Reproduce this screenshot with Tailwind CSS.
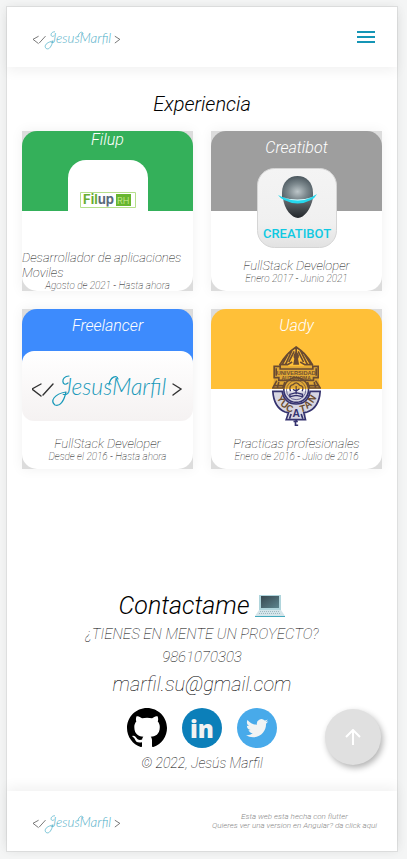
<!DOCTYPE html>
<html lang="es">
<head>
<meta charset="utf-8">
<meta name="viewport" content="width=device-width, initial-scale=1">
<title>Jesús Marfil</title>
<script src="https://cdn.jsdelivr.net/npm/@tailwindcss/browser@4"></script>
</head>
<body class="min-h-screen bg-[#f4f5f5] pt-[6px] pr-[9px] pb-[7px] pl-[6px] font-['Roboto',sans-serif] italic font-light text-black">
<svg class="hidden" aria-hidden="true">
  <symbol id="signature" viewBox="0 0 151 36">
    <g fill="none" stroke-linecap="round">
      <path d="M9 11 0 16 9 23M21 11 11 22" stroke="#333" stroke-width="1.4"/>
      <path d="m141 11 8 5-8 6" stroke="#333" stroke-width="1.4"/>
      <path d="M37 3c-9 0-7 12-1 7M34 19C22 21 18 28 23 32c5 2 9-4 11-13M77 12c1-8 8-11 9-6" stroke="#1999b9" stroke-width="1.2"/>
    </g>
    <text x="31" y="22" fill="#1999b9" font-family="Lato, sans-serif" font-style="italic" font-weight="300" font-size="23">JesusMarfil</text>
  </symbol>
</svg>
<div class="flex min-h-[846px] flex-col border border-[#dedfdf] bg-white shadow-[0_0_10px_rgba(0,0,0,0.05)]">
  <header class="flex h-[60px] items-center justify-between pr-[22px] pl-[26px] shadow-[0_4px_12px_rgba(0,0,0,0.06)]">
    <a href="#inicio" aria-label="Jesús Marfil" class="block pt-[6px]"><svg class="h-[21px] w-[88px] opacity-80"><use href="#signature"/></svg></a>
    <button type="button" aria-label="Menú"><svg class="size-[18px]" viewBox="0 0 18 18" fill="none" stroke="#1595b5" stroke-width="2"><path d="M0 4h18M0 9h18M0 14h18"/></svg></button>
  </header>

  <main id="inicio" class="flex flex-1 flex-col">
    <section class="px-[15px] pt-6">
      <h1 class="text-center text-[20px] leading-[26px]">Experiencia</h1>
      <div class="mt-[14px] grid grid-cols-2 gap-[18px]">
        <div class="bg-[#dcdcdc] shadow-[0_0_12px_rgba(0,0,0,0.06)]">
          <article class="flex h-40 flex-col items-center justify-center overflow-hidden rounded-[15px] bg-[linear-gradient(#34b05a_50%,#ffffff_50%)] font-thin text-black">
            <h2 class="text-[16px] leading-5 font-light text-white">Filup</h2>
            <svg class="my-[10px] size-20 shrink-0 rounded-[18px]" viewBox="0 0 80 80" role="img" aria-label="Filup RH">
              <path fill="#fff" d="M0 0h80v80H0z"/>
              <path fill="#fff" stroke="#b5df8b" d="M12.500 32.500h55v15h-55z"/>
              <path fill="#68b62f" d="M48 34h15v12H48z"/>
              <g font-family="Inter, sans-serif" font-style="normal"><text x="15" y="44" fill="#68ad30" font-weight="700" font-size="13">Fil<tspan fill="#596a7b">up</tspan></text><text x="49" y="44" fill="#d3ef9e" font-weight="300" font-size="9">RH</text></g>
            </svg>
            <p class="w-full text-[13px] leading-[15px]">Desarrollador de aplicaciones Moviles</p>
            <p class="text-[10px] leading-3">Agosto de 2021 - Hasta ahora</p>
          </article>
        </div>
        <div class="bg-[#dcdcdc] shadow-[0_0_12px_rgba(0,0,0,0.06)]">
          <article class="flex h-40 flex-col items-center justify-center overflow-hidden rounded-[15px] bg-[linear-gradient(#9e9e9e_50%,#ffffff_50%)] font-thin">
            <h2 class="text-[16px] leading-5 font-light text-white">Creatibot</h2>
            <svg class="my-[10px] size-20 shrink-0" viewBox="0 0 80 80" role="img" aria-label="Creatibot">
              <defs>
                <linearGradient id="tile" y2="1" x2="0"><stop stop-color="#f4f4f4"/><stop offset=".7" stop-color="#f0f0f0"/><stop offset="1" stop-color="#e2e2e2"/></linearGradient>
                <radialGradient id="head" cx=".5" cy=".6" r=".6"><stop stop-color="#bdc6c9"/><stop offset=".5" stop-color="#7d898e"/><stop offset="1" stop-color="#4a565d"/></radialGradient>
                <linearGradient id="chin" y2="1" x2="0"><stop stop-color="#6a7277"/><stop offset="1" stop-color="#22262a"/></linearGradient>
              </defs>
              <rect x=".5" y=".5" width="79" height="79" rx="17" fill="url(#tile)" stroke="#d5d5d5"/>
              <path fill="url(#head)" d="M25 25C25 14 32 8 40.500 8S56 14 56 25v5q-15 8-31 0z"/>
              <path fill="url(#chin)" d="M26 30q15 6 30 0c-2 11-9 20-15 20S27 41 26 30z"/>
              <path fill="#25d7ed" d="M21 27q9 5 19.500 5T60 26q-2 4-6 6-13 7-27 0-4-2-6-5z"/>
              <path fill="#dffcff" d="M25 29q15 5 31 0-15 7-31 0z"/>
              <text x="40" y="70" text-anchor="middle" fill="#10c9e2" font-family="Roboto, sans-serif" font-style="normal" font-weight="500" font-size="13">CREATIBOT</text>
            </svg>
            <p class="text-[13px] leading-[15px]">FullStack Developer</p>
            <p class="text-[10px] leading-3">Enero 2017 - Junio 2021</p>
          </article>
        </div>
        <div class="bg-[#dcdcdc] shadow-[0_0_12px_rgba(0,0,0,0.06)]">
          <article class="flex h-40 flex-col items-center justify-center overflow-hidden rounded-[15px] bg-[linear-gradient(#3d8bfd_50%,#ffffff_50%)] font-thin">
            <h2 class="text-[16px] leading-5 font-light text-white">Freelancer</h2>
            <div class="my-[15px] flex h-[70px] w-full shrink-0 items-center justify-center rounded-[12px] bg-linear-to-b from-white to-[#f5f2f2] px-[10px] pt-[10px]">
              <svg class="h-9 w-full" role="img" aria-label="Jesus Marfil"><use href="#signature"/></svg>
            </div>
            <p class="text-[13px] leading-[15px]">FullStack Developer</p>
            <p class="text-[10px] leading-3">Desde el 2016 - Hasta ahora</p>
          </article>
        </div>
        <div class="bg-[#dcdcdc] shadow-[0_0_12px_rgba(0,0,0,0.06)]">
          <article class="flex h-40 flex-col items-center justify-center overflow-hidden rounded-[15px] bg-[linear-gradient(#ffc038_50%,#ffffff_50%)] font-thin">
            <h2 class="text-[16px] leading-5 font-light text-white">Uady</h2>
            <svg class="my-[10px] h-20 w-[49px] shrink-0" viewBox="0 0 146 240" role="img" aria-label="Universidad Autónoma de Yucatán">
              <defs><linearGradient id="ink" gradientUnits="userSpaceOnUse" x1="0" y1="129" x2="0" y2="131"><stop stop-color="#6a4b31"/><stop offset="1" stop-color="#35336f"/></linearGradient></defs>
              <path fill="#35336f" fill-opacity=".2" d="M2 136h142q-3 49-39 62l-10 23H50l-10-23Q5 184 2 136z"/>
              <path fill="#6a4b31" fill-opacity=".2" d="M6 61h132v34l6 31H2l4-31z"/>
              <g fill="none" stroke="url(#ink)" stroke-width="5">
                <path d="M22 58Q40 24 72 3q32 21 50 55M72 3v20M60 12 40 56M50 20 30 56M84 12l22 44M94 20l22 36M66 16 50 48M78 16l16 32"/>
                <path d="M22 56h24l14-8M122 56H98l-14-8M6 61h18v8h98v-8h16v34h-14v8H20v-8H6zM12 67v22M132 67v22"/>
                <path d="M66 54h12l-3-16q7-9-3-18-9 9-3 18z" fill="url(#ink)"/>
                <path d="M14 104 2 126h30l6-18M130 104l14 22h-32l-6-18M8 119h24M112 119h26M20 108l-4 16M126 108l4 16"/>
                <circle cx="72" cy="132" r="37"/><circle cx="72" cy="132" r="29" stroke-width="2"/>
                <path d="M55 136q-6-18 8-20 9-12 20 2 14 2 7 18M72 120v24M62 130l10 5 10-7M53 145l19-5 19 5v7l-19-4-19 4z" stroke-width="4"/>
                <path d="M2 136h28q6 37 42 38 36-1 42-38h30q-3 49-39 62l-10 2 5 21H42l7-21-10-2Q5 184 2 136z"/>
                <path d="M72 221v7M64 226h13M70 229v9h8M57 204l-5 14M87 204l5 14"/>
              </g>
              <g fill="url(#ink)" font-family="Liberation Sans, sans-serif" font-style="normal" font-weight="700" text-anchor="middle">
                <text x="72" y="86" font-size="17">UNIVERSIDAD</text><text x="72" y="101" font-size="15">AUTONOMA</text>
                <text transform="translate(18 164) rotate(58)" font-size="29">Y</text><text transform="translate(31 183) rotate(38)" font-size="29">U</text><text transform="translate(50 197) rotate(15)" font-size="29">C</text><text x="72" y="213" font-size="31">A</text><text transform="translate(94 197) rotate(-15)" font-size="29">T</text><text transform="translate(113 183) rotate(-38)" font-size="29">A</text><text transform="translate(128 164) rotate(-58)" font-size="29">N</text>
              </g>
            </svg>
            <p class="text-[13px] leading-[15px]">Practicas profesionales</p>
            <p class="text-[10px] leading-3">Enero de 2016 - Julio de 2016</p>
          </article>
        </div>
      </div>
    </section>

    <section class="relative mt-auto flex flex-col items-center pb-[18px] text-center font-thin">
      <h2 class="flex items-center gap-[6px] text-[25px] leading-[34px] font-light">Contactame
        <svg class="h-6 w-[30px]" viewBox="0 0 30 24" role="img" aria-label="computadora portátil">
          <defs><linearGradient id="screen" x2="1" y2="1"><stop stop-color="#37474f"/><stop offset="1" stop-color="#5d858e"/></linearGradient></defs>
          <path fill="#b0d5dc" d="M4 1h22v15H4z"/><path fill="url(#screen)" d="M6 2h18v12H6z"/>
          <path fill="#d5e5ea" d="M4 16h22l4 6H0z"/><path stroke="#9fb8c1" stroke-dasharray="1 1" d="M5 17.500h20M4 19.500h21"/><path fill="#45a9bd" d="M0 22h30v1H0z"/>
        </svg>
      </h2>
      <p class="text-[15px] leading-[23px]">¿TIENES EN MENTE UN PROYECTO?</p>
      <p class="text-[15px] leading-[23px]"><a href="tel:9861070303">9861070303</a></p>
      <p class="text-[20px] leading-[30px]"><a href="mailto:marfil.su@gmail.com">marfil.su@gmail.com</a></p>
      <nav aria-label="Redes sociales" class="mt-[9px] flex gap-[15px]">
        <a href="#github" aria-label="GitHub"><svg class="size-10" viewBox="0 0 16 16"><path d="M8 0C3.580 0 0 3.580 0 8c0 3.540 2.290 6.530 5.470 7.590.4.070.55-.17.55-.38 0-.19-.01-.82-.01-1.490-2.010.37-2.530-.49-2.690-.94-.09-.23-.48-.94-.82-1.130-.28-.15-.68-.52-.01-.53.63-.01 1.080.58 1.230.82.72 1.210 1.870.87 2.330.66.07-.52.28-.87.51-1.070-1.780-.2-3.640-.89-3.640-3.950 0-.87.31-1.590.82-2.150-.08-.2-.36-1.020.08-2.120 0 0 .67-.21 2.200.82.64-.18 1.320-.27 2-.27s1.360.09 2 .27c1.530-1.040 2.200-.82 2.200-.82.44 1.100.16 1.920.08 2.120.51.56.82 1.270.82 2.150 0 3.070-1.870 3.750-3.650 3.950.29.25.54.73.54 1.480 0 1.070-.01 1.930-.01 2.200 0 .21.15.46.55.38A8 8 0 0 0 16 8c0-4.420-3.580-8-8-8Z"/></svg></a>
        <a href="#linkedin" aria-label="LinkedIn"><svg class="size-10" viewBox="0 0 40 40"><circle cx="20" cy="20" r="20" fill="#0c7fb9"/><text x="20" y="30" text-anchor="middle" fill="#f2f2f2" font-family="Open Sans, sans-serif" font-style="normal" font-weight="800" font-size="24">in</text></svg></a>
        <a href="#twitter" aria-label="Twitter"><svg class="size-10" viewBox="0 0 40 40"><circle cx="20" cy="20" r="20" fill="#48aaea"/><path transform="translate(9 9) scale(.93)" fill="#f2f4f4" d="M23.953 4.570a10 10 0 0 1-2.825.775 4.958 4.958 0 0 0 2.163-2.723 9.900 9.900 0 0 1-3.127 1.184 4.920 4.920 0 0 0-8.384 4.482C7.690 8.095 4.067 6.130 1.640 3.162a4.822 4.822 0 0 0-.666 2.475c0 1.710.870 3.213 2.188 4.096a4.904 4.904 0 0 1-2.228-.616v.060a4.923 4.923 0 0 0 3.946 4.827 4.996 4.996 0 0 1-2.212.085 4.936 4.936 0 0 0 4.604 3.417 9.867 9.867 0 0 1-6.102 2.105c-.390 0-.779-.023-1.170-.067a13.995 13.995 0 0 0 7.557 2.209c9.053 0 13.998-7.496 13.998-13.985 0-.210 0-.420-.015-.630A9.935 9.935 0 0 0 24 4.590z"/></svg></a>
      </nav>
      <p class="mt-[5px] text-[14px] leading-5">© 2022, Jesús Marfil</p>
      <button type="button" aria-label="Volver arriba" class="absolute right-[16px] bottom-[26px] flex size-14 items-center justify-center rounded-full bg-[#e0e0e0] shadow-[2px_3px_6px_rgba(0,0,0,0.3)]"><svg class="size-4" viewBox="0 0 16 16" fill="none" stroke="#fff" stroke-width="2"><path d="M8 16V1M1 8l7-7 7 7"/></svg></button>
    </section>
  </main>

  <footer class="flex h-[60px] items-center justify-between pr-[20px] pl-[26px] shadow-[0_-4px_12px_rgba(0,0,0,0.06)]">
    <a href="#inicio" aria-label="Jesús Marfil" class="block pt-[6px]"><svg class="h-[21px] w-[88px] opacity-80"><use href="#signature"/></svg></a>
    <p class="text-center text-[8px] leading-[9px] text-[#888888]">Esta web esta hecha con flutter<br><a href="#angular">Quieres ver una version en Angular? da click aqui</a></p>
  </footer>
</div>
</body>
</html>
